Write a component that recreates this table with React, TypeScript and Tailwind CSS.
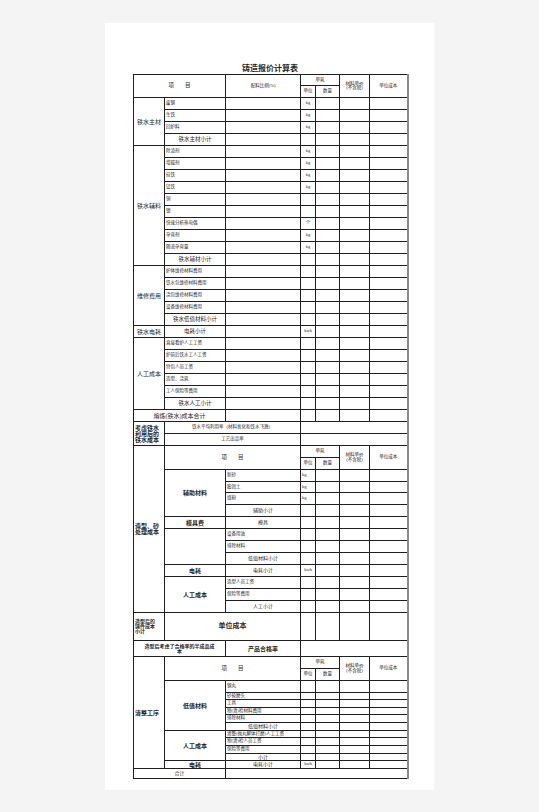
import type { ReactNode, TdHTMLAttributes } from "react";

type CellProps = TdHTMLAttributes<HTMLTableCellElement> & { children?: ReactNode };

function C({ children, className = "", ...rest }: CellProps) {
  return (
    <td
      className={`border border-[#1f1f1f] p-0 align-middle whitespace-nowrap overflow-hidden leading-none ${className}`}
      {...rest}
    >
      {children}
    </td>
  );
}

// four trailing cells: 单位 / 数量 / 单价 / 成本
function Tail({ unit, low }: { unit?: string; low?: boolean }) {
  return (
    <>
      <C className={`text-[4.5px] ${low ? "align-bottom text-left pl-[1px]" : "text-center"}`}>{unit}</C>
      <C />
      <C />
      <C />
    </>
  );
}

function Header({ first }: { first?: ReactNode }) {
  return (
    <>
      <tr className="h-[12px]">
        {first}
        <C colSpan={2} rowSpan={2} className="text-center text-[5.5px]">
          项&emsp;&emsp;目
        </C>
        <C colSpan={2} className="text-center text-[4.5px]">单耗</C>
        <C rowSpan={2} className="text-center text-[4.5px] leading-[5px]">
          材料单价
          <br />
          (不含税)
        </C>
        <C rowSpan={2} className="text-center text-[4.5px]">单位成本</C>
      </tr>
      <tr className="h-[12px]">
        <C className="text-center text-[4.5px]">单位</C>
        <C className="text-center text-[4.5px]">数量</C>
      </tr>
    </>
  );
}

type Item = { name: string; unit?: string; sub?: boolean };

function Group({ label, items, h = "h-[12px]" }: { label: string; items: Item[]; h?: string }) {
  return (
    <>
      {items.map((it, i) => (
        <tr key={it.name} className={h}>
          {i === 0 && (
            <C rowSpan={items.length} className="text-center text-[6px]">
              {label}
            </C>
          )}
          <C className={it.sub ? "text-center text-[5.5px]" : "text-left pl-[1px] text-[4.5px]"}>{it.name}</C>
          <C />
          <Tail unit={it.unit} />
        </tr>
      ))}
    </>
  );
}

const main: Item[] = [
  { name: "废钢", unit: "kg" },
  { name: "生铁", unit: "kg" },
  { name: "回炉料", unit: "kg" },
  { name: "铁水主材小计", sub: true },
];

const aux: Item[] = [
  { name: "除渣剂", unit: "kg" },
  { name: "增碳剂", unit: "kg" },
  { name: "硅铁", unit: "kg" },
  { name: "锰铁", unit: "kg" },
  { name: "铜" },
  { name: "镍" },
  { name: "快速分析热电偶", unit: "个" },
  { name: "孕育剂", unit: "kg" },
  { name: "随流孕育量", unit: "kg" },
  { name: "铁水辅材小计", sub: true },
];

const repair: Item[] = [
  { name: "炉体维修材料费用" },
  { name: "铁水包维修材料费用" },
  { name: "浇包维修材料费用" },
  { name: "设备维修材料费用" },
  { name: "铁水低值材料小计", sub: true },
];

const labor: Item[] = [
  { name: "直接看炉人工工资" },
  { name: "炉前后铁水工人工资" },
  { name: "特包人员工资" },
  { name: "造型、浇筑" },
  { name: "工人保险等费用" },
  { name: "铁水人工小计", sub: true },
];

// rows of a sub group in sections 2 and 3
function SubRows({
  label,
  items,
  heights,
  low,
}: {
  label?: string;
  items: Item[];
  heights: string[];
  low?: boolean;
}) {
  return (
    <>
      {items.map((it, i) => (
        <tr key={it.name} className={heights[i]}>
          {i === 0 && (
            <C rowSpan={items.length} className="text-center text-[6px] font-bold">
              {label}
            </C>
          )}
          <C className={it.sub ? "text-center text-[5px]" : "text-left pl-[1px] text-[4.5px]"}>{it.name}</C>
          <Tail unit={it.unit} low={low} />
        </tr>
      ))}
    </>
  );
}

export default function App() {
  return (
    <div className="min-h-screen bg-[#f4f4f4] pt-[23px] font-['Liberation_Serif','Noto_Sans_CJK_SC',serif] text-[#1f1f1f]">
      <div className="mx-auto h-[767px] w-[329px] bg-white pt-[42px]">
        <div className="ml-[28px] w-[274px]">
          <h1 className="mb-[1px] text-center text-[8px] font-bold leading-[8px]">铸造报价计算表</h1>
          <table className="w-[274px] table-fixed border-collapse border-r-2 border-r-[#8a8a8a]">
            <colgroup>
              <col className="w-[31px]" />
              <col className="w-[61px]" />
              <col className="w-[75px]" />
              <col className="w-[15px]" />
              <col className="w-[24px]" />
              <col className="w-[30px]" />
              <col className="w-[38px]" />
            </colgroup>
            <tbody>
              {/* 熔炼 */}
              <tr className="h-[11px]">
                <C colSpan={2} rowSpan={2} className="text-center text-[5.5px]">
                  项&emsp;&emsp;目
                </C>
                <C rowSpan={2} className="text-center text-[4.5px]">配料比例(%)</C>
                <C colSpan={2} className="text-center text-[4.5px]">单耗</C>
                <C rowSpan={2} className="text-center text-[4.5px] leading-[5px]">
                  材料单价
                  <br />
                  (不含税)
                </C>
                <C rowSpan={2} className="text-center text-[4.5px]">单位成本</C>
              </tr>
              <tr className="h-[12px]">
                <C className="text-center text-[4.5px]">单位</C>
                <C className="text-center text-[4.5px]">数量</C>
              </tr>
              <Group label="铁水主材" items={main} />
              <Group label="铁水辅料" items={aux} />
              <Group label="维修费用" items={repair} />
              <tr className="h-[12px]">
                <C className="text-center text-[6px]">铁水电耗</C>
                <C className="text-center text-[5.5px]">电耗小计</C>
                <C />
                <Tail unit="kwh" />
              </tr>
              <Group label="人工成本" items={labor} />
              <tr className="h-[12px]">
                <C colSpan={2} className="text-center text-[6px]">熔炼(铁水)成本合计</C>
                <C />
                <Tail />
              </tr>
              <tr className="h-[12px]">
                <C rowSpan={2} className="text-left pl-[1px] text-[6px] font-bold leading-[7px]">
                  考虑铁水
                  <br />
                  利用后的
                  <br />
                  铁水成本
                </C>
                <C colSpan={2} className="text-center text-[4.5px]">铁水平均利用率（材料氧化和铁水飞溅）</C>
                <C colSpan={4} />
              </tr>
              <tr className="h-[12px]">
                <C colSpan={2} className="text-center text-[4.5px]">工艺出品率</C>
                <C colSpan={4} />
              </tr>

              {/* 造型、砂处理 */}
              <Header
                first={
                  <C rowSpan={14} className="text-left pl-[1px] text-[6px] font-bold leading-[7px]">
                    造型、砂
                    <br />
                    处理成本
                  </C>
                }
              />
              <SubRows
                label="辅助材料"
                low
                items={[
                  { name: "新砂", unit: "kg" },
                  { name: "膨润土", unit: "kg" },
                  { name: "煤粉", unit: "kg" },
                  { name: "辅助小计", sub: true },
                ]}
                heights={["h-[12px]", "h-[11px]", "h-[12px]", "h-[12px]"]}
              />
              <tr className="h-[12px]">
                <C className="text-center text-[6px] font-bold">模具费</C>
                <C className="text-center text-[5px]">模具</C>
                <Tail />
              </tr>
              <SubRows
                items={[{ name: "设备用油" }, { name: "排除材料" }, { name: "低值材料小计", sub: true }]}
                heights={["h-[12px]", "h-[12px]", "h-[12px]"]}
              />
              <tr className="h-[12px]">
                <C className="text-center text-[6px] font-bold">电耗</C>
                <C className="text-center text-[5px]">电耗小计</C>
                <Tail unit="kwh" />
              </tr>
              <SubRows
                label="人工成本"
                items={[{ name: "造型人员工资" }, { name: "保险等费用" }, { name: "人工小计", sub: true }]}
                heights={["h-[12px]", "h-[12px]", "h-[12px]"]}
              />
              <tr className="h-[28px]">
                <C className="text-left pl-[1px] text-[5px] font-bold leading-[6px]">
                  造型后的
                  <br />
                  铸件成本
                  <br />
                  小计
                </C>
                <C colSpan={2} className="text-center text-[7px] font-bold">单位成本</C>
                <Tail />
              </tr>
              <tr className="h-[16px]">
                <C colSpan={2} className="text-center text-[5px] font-bold leading-[6px]">
                  造型后考虑了合格率的半成品成
                  <br />
                  本
                </C>
                <C className="text-center text-[6px] font-bold">产品合格率</C>
                <C colSpan={4} />
              </tr>

              {/* 清整工序 */}
              <Header
                first={
                  <C rowSpan={13} className="text-left pl-[1px] text-[6px] font-bold">
                    清整工序
                  </C>
                }
              />
              <SubRows
                label="低值材料"
                items={[
                  { name: "钢丸" },
                  { name: "砂轮磨头" },
                  { name: "工具" },
                  { name: "物(清)检材料费用" },
                  { name: "排除材料" },
                  { name: "低值材料小计", sub: true },
                ]}
                heights={["h-[12px]", "h-[7px]", "h-[8px]", "h-[7px]", "h-[8px]", "h-[8px]"]}
              />
              <SubRows
                label="人工成本"
                items={[
                  { name: "清整(抛丸解体打磨)人工工资" },
                  { name: "物(清)检人员工资" },
                  { name: "保险等费用" },
                  { name: "小计", sub: true },
                ]}
                heights={["h-[7px]", "h-[8px]", "h-[8px]", "h-[7px]"]}
              />
              <tr className="h-[8px]">
                <C className="text-center text-[6px] font-bold">电耗</C>
                <C className="text-center text-[5px]">电耗小计</C>
                <Tail unit="kwh" />
              </tr>
              <tr className="h-[10px]">
                <C colSpan={2} className="text-center text-[5px]">合计</C>
                <C colSpan={5} />
              </tr>
            </tbody>
          </table>
        </div>
      </div>
    </div>
  );
}
